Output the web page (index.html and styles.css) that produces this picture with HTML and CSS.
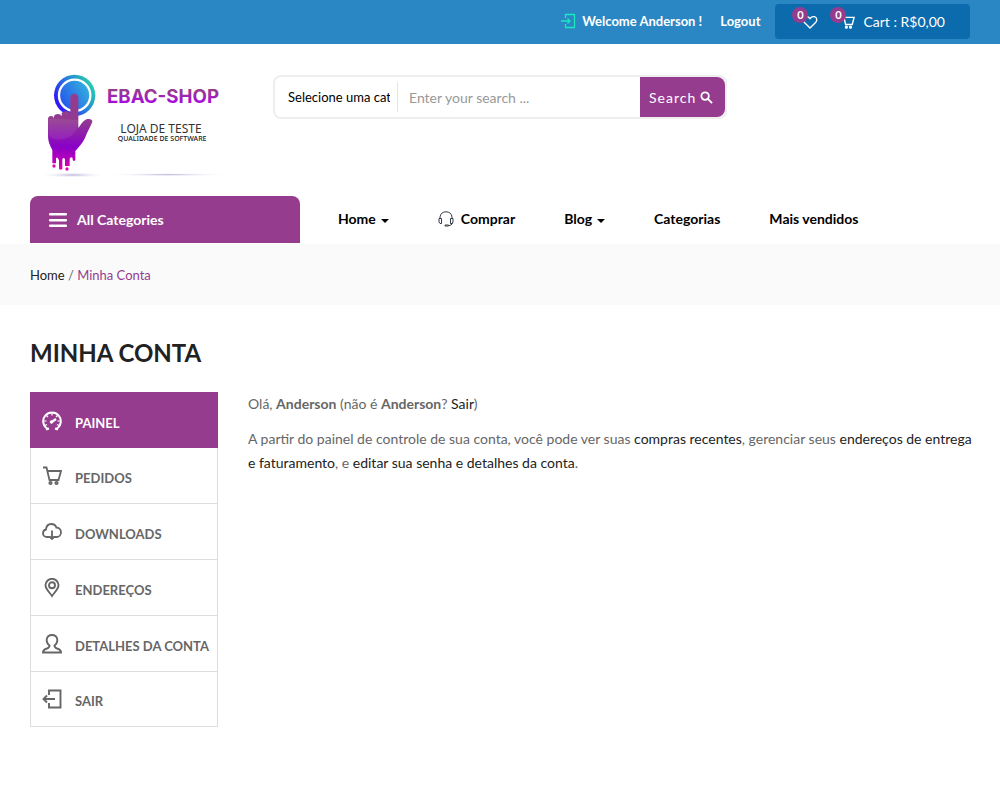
FILE: index.html
```html
<!DOCTYPE html>
<html lang="pt-BR">
<head>
<meta charset="utf-8">
<meta name="viewport" content="width=device-width, initial-scale=1">
<title>Minha Conta</title>
<link rel="stylesheet" href="styles.css">
</head>
<body>
<div class="topbar">
  <div class="container topbar-row">
    <a class="welcome" href="#conta">
      <svg class="icon-16" viewBox="0 0 16 16" fill="none" stroke="currentColor" stroke-width="1.300"><path d="M5.500 5V1.500h9v13h-9V11M1 8h9M7.500 5.500L10 8 7.500 10.500"/></svg>
      <span>Welcome Anderson !</span>
    </a>
    <a class="logout" href="#sair">Logout</a>
    <div class="cart-box">
      <a class="wish" href="#favoritos" aria-label="Favoritos">
        <span class="badge">0</span>
        <svg class="icon-16" viewBox="0 0 16 16" fill="none" stroke="currentColor" stroke-width="1.300"><path d="M8 14L2.200 8.200C.4 6.200 1.100 3.400 3.600 2.700 5.500 2.200 7 3 8 4.600 9 3 10.500 2.200 12.400 2.700c2.500.7 3.200 3.500 1.400 5.500z"/></svg>
      </a>
      <a class="cart" href="#carrinho">
        <span class="badge">0</span>
        <svg class="icon-16" viewBox="0 0 20 20" fill="none" stroke="currentColor" stroke-width="1.900"><path d="M1 1.500h3.500L7.500 14h8.800L18.800 4.500H5.500"/><circle cx="8.500" cy="17.500" r="1.200"/><circle cx="14" cy="17.500" r="1.200"/></svg>
        <span>Cart : R$0,00</span>
      </a>
    </div>
  </div>
</div>

<header class="container header">
  <a class="logo" href="#inicio" aria-label="EBAC-SHOP">
    <svg class="logo-art" viewBox="0 0 660 390">
      <defs>
        <linearGradient id="ring" x1="0" y1=".8" x2="1" y2=".2"><stop offset="0" stop-color="#3000ff"/><stop offset=".5" stop-color="#2876e0"/><stop offset="1" stop-color="#26dba6"/></linearGradient>
        <linearGradient id="disc" x1="0" y1=".8" x2="1" y2=".2"><stop offset="0" stop-color="#2450ec"/><stop offset="1" stop-color="#35b5dc"/></linearGradient>
        <linearGradient id="hand" gradientUnits="userSpaceOnUse" x1="0" y1="100" x2="0" y2="330"><stop offset="0" stop-color="#963c8e"/><stop offset=".35" stop-color="#923a90"/><stop offset=".7" stop-color="#8a00c8"/><stop offset="1" stop-color="#e000b0"/></linearGradient>
        <linearGradient id="word" x1="0" y1="0" x2="0" y2="1"><stop offset=".25" stop-color="#963c8e"/><stop offset=".8" stop-color="#a808e0"/></linearGradient>
        <radialGradient id="shade"><stop offset="0" stop-color="#b9b4dc"/><stop offset="1" stop-color="#ffffff" stop-opacity="0"/></radialGradient>
      </defs>
      <circle cx="134" cy="106" r="62" fill="url(#ring)"/>
      <circle cx="134" cy="106" r="47" fill="url(#disc)" stroke="#fff" stroke-width="7"/>
      <path fill="url(#hand)" d="M121 112Q122 101 133 101Q144 101 145 113V204C154 191 161 180 172 177Q187 175 187 185C181 202 171 216 165 234C157 251 145 262 136 273V300Q132 306 128 300V294Q122 288 119 296V318H105V297Q98 289 97 300V326H87V301Q82 288 78 295V310H67V270C60 257 54 245 54 228V175Q56 168 63 168Q71 168 72 176V168Q75 162 83 162Q92 162 95 169V160Q99 152 108 154Q117 154 121 161Z"/>
      <path fill="#fff" opacity=".07" d="M55 175L145 180Q145 220 110 235Q75 247 55 225Z"/>
      <g fill="#dc08b4"><circle cx="72" cy="318" r="5"/><circle cx="92" cy="324" r="5"/><circle cx="111" cy="327" r="5"/></g>
      <ellipse cx="128" cy="345" rx="100" ry="8" fill="url(#shade)"/>
      <ellipse cx="415" cy="344" rx="190" ry="5" fill="url(#shade)"/>
      <text class="logo-name" x="231" y="129" fill="url(#word)">EBAC-SHOP</text>
      <text class="logo-line" x="271" y="219">LOJA DE TESTE</text>
      <text class="logo-sub" x="263" y="243">QUALIDADE DE SOFTWARE</text>
    </svg>
  </a>
  <form class="search">
    <select class="search-cat" aria-label="Categoria"><option>Selecione uma categoria</option></select>
    <input class="search-input" type="text" placeholder="Enter your search ..." aria-label="Busca">
    <button class="search-btn" type="submit">Search
      <svg class="search-icon" viewBox="0 0 14 14" fill="none" stroke="currentColor" stroke-width="2"><circle cx="5.500" cy="5.500" r="4"/><path d="M8.500 8.500l4.500 4.500"/></svg>
    </button>
  </form>
</header>

<div class="container navrow">
  <button class="categories" type="button">
    <svg class="burger" viewBox="0 0 18 14" fill="currentColor"><rect width="18" height="2.500" rx="1"/><rect y="6" width="18" height="2.500" rx="1"/><rect y="11.500" width="18" height="2.500" rx="1"/></svg>
    All Categories
  </button>
  <nav class="menu">
    <a href="#home">Home<span class="caret"></span></a>
    <a href="#comprar"><svg class="headset" viewBox="0 0 16 16" fill="none" stroke="#333a48"><path d="M2 7V6C2.500 2.500 4.700.8 8 .8s5.500 1.700 6 5.200v1M14.500 12c-.5 1.800-2 2.500-4 2.500M1 7.500h2.500v5H2L1 11zM15 7.500h-2.500v5H14l1-1.500zM7 14h3.500v1H7z"/></svg>Comprar</a>
    <a href="#blog">Blog<span class="caret"></span></a>
    <a href="#categorias">Categorias</a>
    <a href="#vendidos">Mais vendidos</a>
  </nav>
</div>

<div class="crumbs"><div class="container"><a href="#home">Home</a> / <span class="current">Minha Conta</span></div></div>

<main class="container main">
  <h1 class="title">MINHA CONTA</h1>
  <div class="account">
    <nav class="side">
      <a class="side-link active" href="#painel"><svg class="side-icon" viewBox="0 0 20 20" fill="none" stroke="currentColor"><path stroke-width="2" d="M5.500 17.800A8.800 8.800 0 1 1 14.500 17.800"/><path stroke-width="1.200" d="M10 2v2.500M4.500 4.500l1.500 1.500M2 10h2.500M15.500 4.500L14 6M18 10h-2.500M3 14.500l2-1M17 14.500l-2-1"/><path stroke-width="2" d="M4 18.500l3-1M16 18.500l-3-1"/><path stroke-width="2.200" d="M9 11.500l5-3.500"/><circle cx="9.500" cy="11" r="1.300" fill="currentColor"/></svg>PAINEL</a>
      <a class="side-link" href="#pedidos"><svg class="side-icon" viewBox="0 0 20 20" fill="none" stroke="currentColor" stroke-width="1.800"><path d="M1 1.500h3.500L7.500 14h9L19 5H5.500"/><circle cx="8.500" cy="17" r="1.200"/><circle cx="14.500" cy="17" r="1.200"/></svg>PEDIDOS</a>
      <a class="side-link" href="#downloads"><svg class="side-icon" viewBox="0 0 20 20" fill="none" stroke="currentColor" stroke-width="1.800"><path d="M7.500 15H5C2.500 15 1 13.500 1 11.200 1 9.300 2.200 7.900 4 7.500 4.300 4 6.500 2 9.300 2c2.400 0 4.300 1.300 5 3.500 2.700 0 4.700 2 4.700 4.700s-2 4.800-4.500 4.800h-2M10 8.500v8M7.500 14.500L10 17l2.500-2.500"/></svg>DOWNLOADS</a>
      <a class="side-link" href="#enderecos"><svg class="side-icon" viewBox="0 0 20 20" fill="none" stroke="currentColor" stroke-width="1.900"><path d="M10 18C8 15 3.500 11 3.500 7.300a6.500 6.500 0 0 1 13 0C16.500 11 12 15 10 18z"/><circle cx="10" cy="7.300" r="3"/></svg>ENDEREÇOS</a>
      <a class="side-link" href="#detalhes"><svg class="side-icon" viewBox="0 0 20 20" fill="none" stroke="currentColor" stroke-width="1.900"><path d="M7.500 11.500C3 8 4 1 10 1s7 7 2.500 10.500c0 2 .5 2.300 2.500 3 2.500.8 4 1.300 4 4H1c0-2.700 1.500-3.200 4-4 2-.7 2.500-1 2.500-3z"/></svg>DETALHES DA CONTA</a>
      <a class="side-link" href="#sair"><svg class="side-icon" viewBox="0 0 20 20" fill="none" stroke="currentColor" stroke-width="1.900"><path d="M7 6V1.500h11.500v17H7V14M13 10H1.500M5 6.500L1.500 10 5 13.500"/></svg>SAIR</a>
    </nav>
    <section class="content">
      <p>Olá, <strong>Anderson</strong> (não é <strong>Anderson</strong>? <a href="#sair">Sair</a>)</p>
      <p>A partir do painel de controle de sua conta, você pode ver suas <a href="#pedidos">compras recentes</a>, gerenciar seus <a href="#enderecos">endereços de entrega e faturamento</a>, e <a href="#detalhes">editar sua senha e detalhes da conta</a>.</p>
    </section>
  </div>
</main>
</body>
</html>
```
FILE: styles.css
```css
* { box-sizing: border-box; }
body { margin: 0; background: #fff; color: #666; font: 14px/24px Lato, "Open Sans", sans-serif; }
a { color: #222; text-decoration: none; }
svg { flex: none; }
.container { padding: 0 30px; }

.topbar { background: #2b87c4; }
.topbar-row { display: flex; justify-content: flex-end; align-items: flex-start; height: 44px; padding-top: 4px; color: #fff; }
.topbar a { color: #fff; }
.welcome, .logout { display: flex; align-items: center; height: 34px; font-size: 13px; font-weight: 700; }
.welcome { gap: 6px; margin-right: 18px; }
.logout { margin-right: 15px; }
.icon-16 { width: 16px; height: 16px; }
.welcome .icon-16 { color: #19e8c0; }
.cart-box { display: flex; align-items: center; gap: 22px; height: 35px; padding: 0 25px 0 27px; border-radius: 4px; background: #0c6bad; }
.wish, .cart { position: relative; display: flex; align-items: center; }
.cart { gap: 8px; }
.cart .icon-16 { width: 15px; height: 15px; }
.badge { position: absolute; left: -10px; top: -3px; width: 16px; height: 16px; border-radius: 50%; background: #963c8e; font-size: 11px; font-weight: 700; line-height: 16px; text-align: center; }
.wish .badge { top: -7px; }

.header { display: grid; grid-template-columns: 220px minmax(0, 454px); column-gap: 23px; padding-top: 16px; padding-bottom: 6px; }
.logo-art { display: block; width: 100%; }
.logo-name { font: 700 56px Inter, sans-serif; }
.logo-line { font: 36px "Noto Sans", sans-serif; fill: #333; }
.logo-sub { font: 500 21px "Noto Sans", sans-serif; fill: #222; }

.search { display: flex; height: 44px; margin-top: 15px; border: 2px solid #eee; border-radius: 8px; }
.search-cat { width: 123px; margin: 5px 0; padding: 0 7px 0 13px; border: 0; border-right: 1px solid #e5e5e5; appearance: none; background: none; color: #000; font: 13px Lato, sans-serif; }
.search-input { flex: 1; min-width: 0; padding: 0 11px; border: 0; background: none; font: 14px Lato, sans-serif; }
.search-input::placeholder { color: #999; }
.search-btn { display: flex; align-items: center; gap: 4px; width: 85px; padding: 0 0 0 9px; border: 0; border-radius: 0 8px 8px 0; background: #963c8e; color: #fff; font: 14px Lato, sans-serif; letter-spacing: 1px; }
.search-icon { width: 13px; height: 13px; }

.navrow { display: flex; height: 48px; }
.categories { display: flex; align-items: center; gap: 10px; width: 270px; height: 47px; padding: 0 19px; border: 0; border-radius: 8px 8px 0 0; background: #963c8e; color: #fff; font: 700 14px Lato, sans-serif; }
.burger { width: 18px; height: 14px; }
.menu { display: flex; align-items: center; gap: 49px; height: 46px; padding-left: 38px; font-weight: 700; }
.menu a { display: flex; align-items: center; color: #000; }
.headset { width: 16px; height: 16px; margin-right: 7px; }
.caret { margin: 3px 0 0 5px; border: 4px solid transparent; border-top-color: #000; border-bottom: 0; }

.crumbs { padding: 19px 0 18px; background: #fafafa; font-size: 13px; }
.current { color: #963c8e; }

.main { padding: 31px 26px 61px 30px; }
.title { margin: 0 0 22px; color: #222; font-size: 24px; font-weight: 700; line-height: 34px; }
.account { display: grid; grid-template-columns: 188px minmax(0, 1fr); column-gap: 30px; align-items: start; }
.side { border: 1px solid #ddd; border-top: 0; }
.side-link { display: flex; align-items: center; gap: 13px; height: 56px; padding: 4px 0 0 11px; border-top: 1px solid #ddd; color: #666; font-size: 13px; font-weight: 700; white-space: nowrap; }
.side-link.active { margin: 0 -1px; padding-left: 12px; border-color: #963c8e; background: #963c8e; color: #fff; }
.side-link.active + .side-link { height: 55px; border-top: 0; }
.side-link:last-child { height: 55px; }
.side-icon { width: 20px; height: 20px; margin-bottom: 4px; }
.content p { margin: 0 0 11px; }
```
